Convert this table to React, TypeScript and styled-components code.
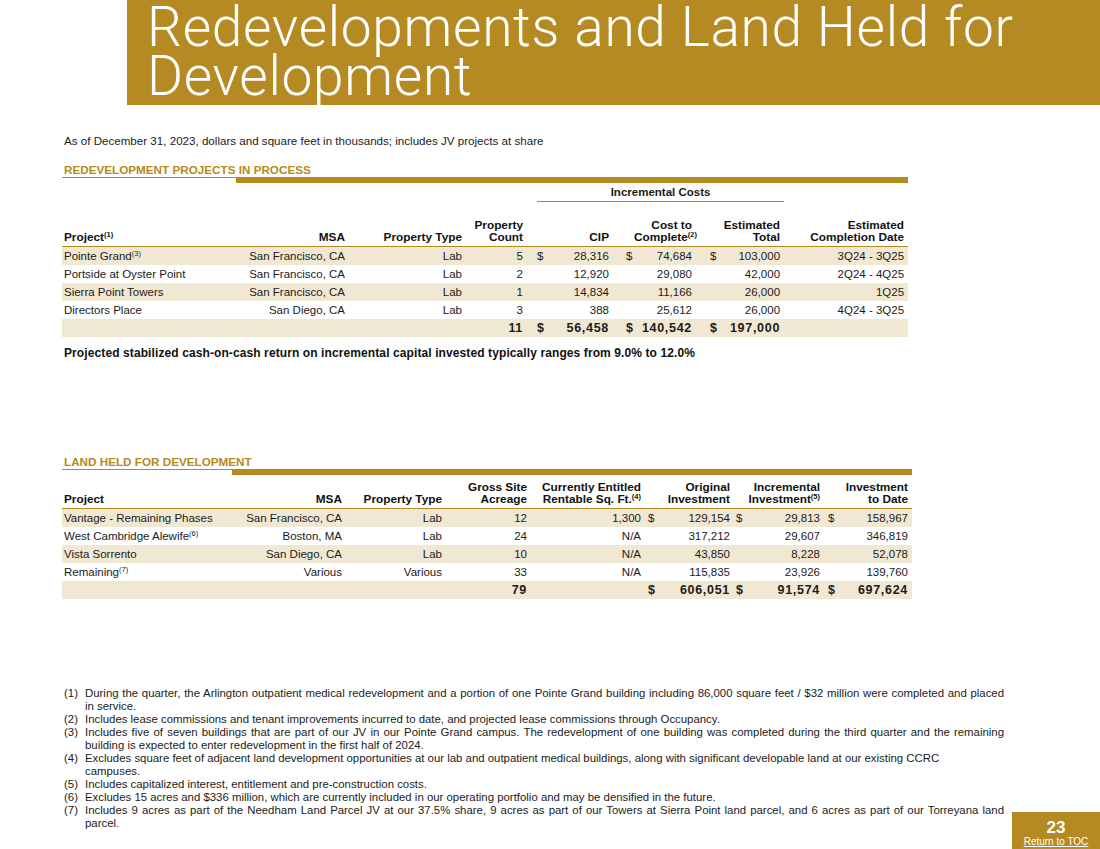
import React from "react";
import styled, { createGlobalStyle } from "styled-components";

const GOLD = "#B68A22";
const SHADE = "#F1E8D4";

const Global = createGlobalStyle`
  html, body { margin: 0; padding: 0; background: #fff; }
  body { font-family: "Liberation Sans", Arial, sans-serif; color: #1b1b1b; }
`;

const Page = styled.div`
  position: relative;
  width: 1100px;
  height: 849px;
  overflow: hidden;
  background: #fff;
`;

const TitleBand = styled.header`
  margin-left: 127px;
  height: 105px;
  box-sizing: border-box;
  padding: 3px 0 0 20px;
  background: ${GOLD};
`;

const Title = styled.h1`
  margin: 0;
  font-family: Roboto, "Liberation Sans", sans-serif;
  font-weight: 300;
  font-size: 55px;
  line-height: 49px;
  color: #fff;
  letter-spacing: 0.7px;
`;

const Content = styled.main`
  padding-left: 62px;
`;

const Subtitle = styled.p`
  margin: 29px 0 0 2px;
  font-size: 11.6px;
  line-height: 13px;
  color: #222;
`;

const SectionTitle = styled.h2<{ $top: number }>`
  margin: ${(p) => p.$top}px 0 0 2px;
  font-size: 11.7px;
  line-height: 14px;
  font-weight: 700;
  color: ${GOLD};
`;

const Rule = styled.div<{ $width: number; $thin: number }>`
  display: flex;
  width: ${(p) => p.$width}px;
  height: 6px;
  &::before {
    content: "";
    width: ${(p) => p.$thin}px;
    height: 1px;
    background: ${GOLD};
  }
  &::after {
    content: "";
    flex: 1;
    background: ${GOLD};
  }
`;

const Table = styled.table<{ $width: number }>`
  width: ${(p) => p.$width}px;
  border-collapse: collapse;
  table-layout: fixed;
  font-size: 11.5px;
  color: #1b1b1b;
`;

const GroupRow = styled.tr`
  height: 18px;
`;

const GroupCell = styled.td<{ $line?: boolean }>`
  padding: 0;
  font-weight: 700;
  font-size: 11.5px;
  line-height: 16px;
  text-align: center;
  border-bottom: ${(p) => (p.$line ? `1px solid ${GOLD}` : "none")};
`;

const HeadRow = styled.tr<{ $h: number }>`
  height: ${(p) => p.$h}px;
`;

const HeadCell = styled.th<{ $pr: number; $pl: number; $align: string }>`
  vertical-align: bottom;
  padding: 0 ${(p) => p.$pr}px 3px ${(p) => p.$pl}px;
  font-size: 11.8px;
  line-height: 12px;
  font-weight: 700;
  text-align: ${(p) => p.$align};
  border-bottom: 1px solid ${GOLD};
  white-space: nowrap;
  color: #111;
`;

const BodyRow = styled.tr<{ $shade: boolean; $bold?: boolean }>`
  height: 18px;
  background: ${(p) => (p.$shade ? SHADE : "#fff")};
  font-weight: ${(p) => (p.$bold ? 700 : 400)};
  font-size: ${(p) => (p.$bold ? "12.5px" : "11.5px")};
  letter-spacing: ${(p) => (p.$bold ? "0.7px" : "0")};
`;

const Cell = styled.td<{ $pr: number; $pl: number; $align: string }>`
  padding: 0 ${(p) => p.$pr}px 0 ${(p) => p.$pl}px;
  line-height: 18px;
  text-align: ${(p) => p.$align};
  white-space: nowrap;
`;

const Sup = styled.sup`
  font-size: 7.5px;
  line-height: 0;
  vertical-align: 4px;
  letter-spacing: 0;
`;

const Note = styled.p`
  margin: 9px 0 0 2px;
  font-size: 12px;
  line-height: 14px;
  font-weight: 700;
  letter-spacing: 0.1px;
  color: #111;
`;

const Footnotes = styled.ol`
  list-style: none;
  margin: 88px 0 0 2px;
  padding: 0;
  font-size: 11.4px;
  line-height: 13px;
  color: #1b1b1b;
`;

const FootItem = styled.li`
  display: grid;
  grid-template-columns: 21px 919px;
`;

const FootLine = styled.span<{ $justify?: boolean }>`
  display: block;
  white-space: nowrap;
  text-align: ${(p) => (p.$justify ? "justify" : "left")};
  text-align-last: ${(p) => (p.$justify ? "justify" : "left")};
`;

const PageTab = styled.div`
  position: absolute;
  right: 0;
  bottom: 0;
  width: 88px;
  height: 37px;
  box-sizing: border-box;
  padding-top: 7px;
  background: ${GOLD};
  color: #fff;
  text-align: center;
`;

const PageNum = styled.div`
  font-size: 17px;
  line-height: 17px;
  font-weight: 700;
`;

const TocLink = styled.a`
  display: block;
  font-size: 10px;
  line-height: 11px;
  color: #fff;
  text-decoration: underline;
`;

type Col = { w: number; pr?: number; pl?: number; align?: "left" | "right" };
type Val = React.ReactNode;

const t1Cols: Col[] = [
  { w: 138, pl: 2, align: "left" },
  { w: 149, pr: 4 },
  { w: 117, pr: 4 },
  { w: 71, pr: 14 },
  { w: 8, align: "left" },
  { w: 81, pr: 17 },
  { w: 8, align: "left" },
  { w: 76, pr: 18 },
  { w: 8, align: "left" },
  { w: 66, pr: 4 },
  { w: 124, pr: 4 },
];

const t2Cols: Col[] = [
  { w: 138, pl: 2, align: "left" },
  { w: 146, pr: 4 },
  { w: 100, pr: 4 },
  { w: 85, pr: 4 },
  { w: 117, pr: 7 },
  { w: 8, align: "left" },
  { w: 80, pr: 6 },
  { w: 8, align: "left" },
  { w: 84, pr: 8 },
  { w: 8, align: "left" },
  { w: 76, pr: 4 },
];

const withSup = (text: string, n: number) => (
  <>
    {text}
    <Sup>({n})</Sup>
  </>
);

const t1Head: Val[] = [
  withSup("Project", 1),
  "MSA",
  "Property Type",
  <>Property<br />Count</>,
  "",
  "CIP",
  "",
  <>Cost to<br />Complete<Sup>(2)</Sup></>,
  "",
  <>Estimated<br />Total</>,
  <>Estimated<br />Completion Date</>,
];

const t1Rows: Val[][] = [
  [withSup("Pointe Grand", 3), "San Francisco, CA", "Lab", "5", "$", "28,316", "$", "74,684", "$", "103,000", "3Q24 - 3Q25"],
  ["Portside at Oyster Point", "San Francisco, CA", "Lab", "2", "", "12,920", "", "29,080", "", "42,000", "2Q24 - 4Q25"],
  ["Sierra Point Towers", "San Francisco, CA", "Lab", "1", "", "14,834", "", "11,166", "", "26,000", "1Q25"],
  ["Directors Place", "San Diego, CA", "Lab", "3", "", "388", "", "25,612", "", "26,000", "4Q24 - 3Q25"],
];
const t1Total: Val[] = ["", "", "", "11", "$", "56,458", "$", "140,542", "$", "197,000", ""];

const t2Head: Val[] = [
  "Project",
  "MSA",
  "Property Type",
  <>Gross Site<br />Acreage</>,
  <>Currently Entitled<br />Rentable Sq. Ft.<Sup>(4)</Sup></>,
  "",
  <>Original<br />Investment</>,
  "",
  <>Incremental<br />Investment<Sup>(5)</Sup></>,
  "",
  <>Investment<br />to Date</>,
];

const t2Rows: Val[][] = [
  ["Vantage - Remaining Phases", "San Francisco, CA", "Lab", "12", "1,300", "$", "129,154", "$", "29,813", "$", "158,967"],
  [withSup("West Cambridge Alewife", 6), "Boston, MA", "Lab", "24", "N/A", "", "317,212", "", "29,607", "", "346,819"],
  ["Vista Sorrento", "San Diego, CA", "Lab", "10", "N/A", "", "43,850", "", "8,228", "", "52,078"],
  [withSup("Remaining", 7), "Various", "Various", "33", "N/A", "", "115,835", "", "23,926", "", "139,760"],
];
const t2Total: Val[] = ["", "", "", "79", "", "$", "606,051", "$", "91,574", "$", "697,624"];

const footnotes: { lines: string[]; justify?: boolean }[] = [
  {
    lines: [
      "During the quarter, the Arlington outpatient medical redevelopment and a portion of one Pointe Grand building including 86,000 square feet / $32 million were completed and placed",
      "in service.",
    ],
    justify: true,
  },
  { lines: ["Includes lease commissions and tenant improvements incurred to date, and projected lease commissions through Occupancy."] },
  {
    lines: [
      "Includes five of seven buildings that are part of our JV in our Pointe Grand campus. The redevelopment of one building was completed during the third quarter and the remaining",
      "building is expected to enter redevelopment in the first half of 2024.",
    ],
    justify: true,
  },
  {
    lines: [
      "Excludes square feet of adjacent land development opportunities at our lab and outpatient medical buildings, along with significant developable land at our existing CCRC",
      "campuses.",
    ],
  },
  { lines: ["Includes capitalized interest, entitlement and pre-construction costs."] },
  { lines: ["Excludes 15 acres and $336 million, which are currently included in our operating portfolio and may be densified in the future."] },
  {
    lines: [
      "Includes 9 acres as part of the Needham Land Parcel JV at our 37.5% share, 9 acres as part of our Towers at Sierra Point land parcel, and 6 acres as part of our Torreyana land",
      "parcel.",
    ],
    justify: true,
  },
];

function DataTable({
  cols,
  head,
  headHeight,
  rows,
  total,
  width,
  group,
}: {
  cols: Col[];
  head: Val[];
  headHeight: number;
  rows: Val[][];
  total: Val[];
  width: number;
  group?: boolean;
}) {
  const cellProps = (c: Col) => ({ $pr: c.pr ?? 0, $pl: c.pl ?? 0, $align: c.align ?? "right" });
  return (
    <Table $width={width}>
      <colgroup>
        {cols.map((c, i) => (
          <col key={i} style={{ width: c.w }} />
        ))}
      </colgroup>
      <thead>
        {group && (
          <GroupRow>
            <GroupCell colSpan={4} />
            <GroupCell colSpan={6} $line>
              Incremental Costs
            </GroupCell>
            <GroupCell />
          </GroupRow>
        )}
        <HeadRow $h={headHeight}>
          {head.map((h, i) => (
            <HeadCell key={i} {...cellProps(cols[i])}>
              {h}
            </HeadCell>
          ))}
        </HeadRow>
      </thead>
      <tbody>
        {rows.map((r, ri) => (
          <BodyRow key={ri} $shade={ri % 2 === 0}>
            {r.map((v, i) => (
              <Cell key={i} {...cellProps(cols[i])}>
                {v}
              </Cell>
            ))}
          </BodyRow>
        ))}
        <BodyRow $shade $bold>
          {total.map((v, i) => (
            <Cell key={i} {...cellProps(cols[i])}>
              {v}
            </Cell>
          ))}
        </BodyRow>
      </tbody>
    </Table>
  );
}

export default function App() {
  return (
    <Page>
      <Global />
      <TitleBand>
        <Title>
          Redevelopments and Land Held for
          <br />
          Development
        </Title>
      </TitleBand>
      <Content>
        <Subtitle>As of December 31, 2023, dollars and square feet in thousands; includes JV projects at share</Subtitle>

        <SectionTitle $top={16}>REDEVELOPMENT PROJECTS IN PROCESS</SectionTitle>
        <Rule $width={846} $thin={174} />
        <DataTable cols={t1Cols} head={t1Head} headHeight={45} rows={t1Rows} total={t1Total} width={846} group />
        <Note>Projected stabilized cash-on-cash return on incremental capital invested typically ranges from 9.0% to 12.0%</Note>

        <SectionTitle $top={95}>LAND HELD FOR DEVELOPMENT</SectionTitle>
        <Rule $width={850} $thin={170} />
        <DataTable cols={t2Cols} head={t2Head} headHeight={34} rows={t2Rows} total={t2Total} width={850} />

        <Footnotes>
          {footnotes.map((f, i) => (
            <FootItem key={i}>
              <span>({i + 1})</span>
              <span>
                {f.lines.map((l, li) => (
                  <FootLine key={li} $justify={f.justify && li < f.lines.length - 1}>
                    {l}
                  </FootLine>
                ))}
              </span>
            </FootItem>
          ))}
        </Footnotes>
      </Content>
      <PageTab>
        <PageNum>23</PageNum>
        <TocLink href="#toc">Return to TOC</TocLink>
      </PageTab>
    </Page>
  );
}
